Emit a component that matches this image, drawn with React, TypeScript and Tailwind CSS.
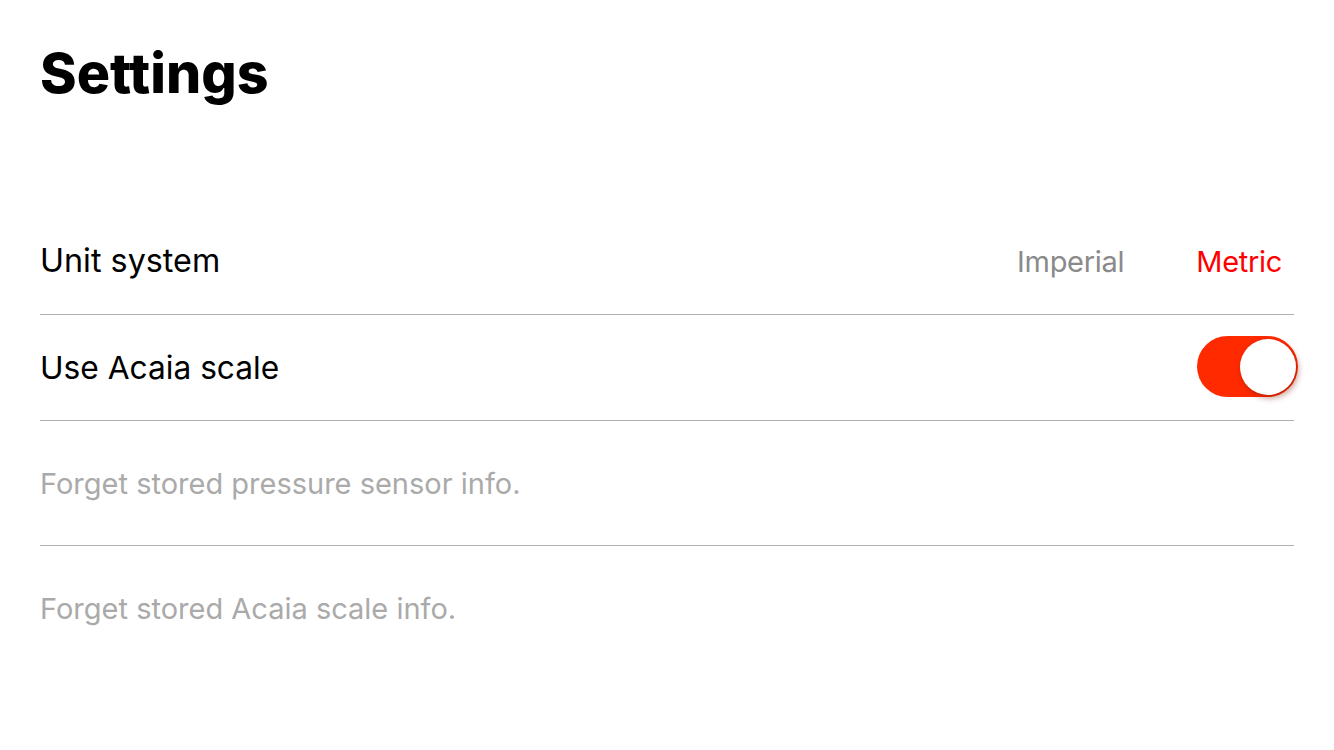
export default function App() {
  return (
    <div className="min-h-screen w-full bg-white font-['Inter','Noto_Sans',sans-serif] text-black">
      <div className="pl-[40px] pr-[40px]">
        <h1 className="pt-[40px] text-[55.5px] leading-[66px] font-extrabold">Settings</h1>

        <div className="mt-[103px]">
          <div className="flex h-[106px] items-center justify-between border-b border-[#b0b0b0]">
            <span className="text-[32.3px]">Unit system</span>
            <div className="flex items-center gap-[72px] pr-[12px] text-[29px] tracking-[-0.3px]">
              <span className="text-[#8a8a8a]">Imperial</span>
              <span className="text-[#ff0000]">Metric</span>
            </div>
          </div>

          <div className="flex h-[106px] items-center justify-between border-b border-[#b0b0b0]">
            <span className="text-[31.7px]">Use Acaia scale</span>
            <div className="relative -mr-[4px] -mt-[2px] h-[61px] w-[101px] rounded-full bg-[#ff2a00]">
              <div className="absolute right-[2px] top-[3px] h-[56px] w-[56px] rounded-full bg-white shadow-[2px_3px_6px_rgba(120,20,0,0.45)]" />
            </div>
          </div>

          <div className="flex h-[125px] items-center border-b border-[#b0b0b0] pt-[2px]">
            <span className="text-[29px] text-[#aaaaaa]">Forget stored pressure sensor info.</span>
          </div>

          <div className="flex h-[126px] items-center">
            <span className="text-[29px] text-[#aaaaaa]">Forget stored Acaia scale info.</span>
          </div>
        </div>
      </div>
    </div>
  );
}
